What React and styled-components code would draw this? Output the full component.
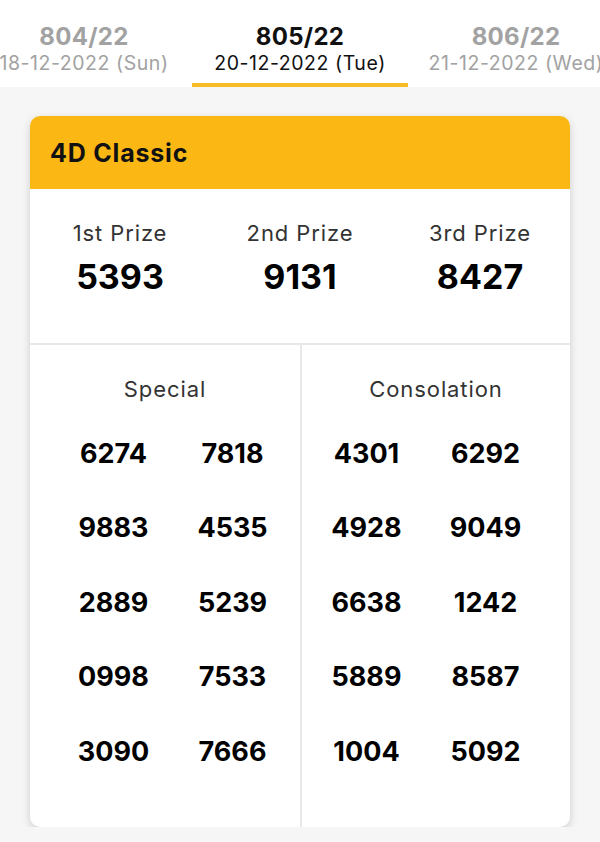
import React from "react";
import styled, { createGlobalStyle } from "styled-components";

const Global = createGlobalStyle`
  html, body { margin: 0; padding: 0; }
  body {
    background: #f6f6f6;
    font-family: "Inter", "Roboto", "Noto Sans", sans-serif;
    color: #111;
  }
`;

const TabBar = styled.div`
  background: #fff;
  overflow: hidden;
  height: 87px;
`;

const TabTrack = styled.div`
  display: flex;
  margin-left: -24px;
`;

const Tab = styled.div`
  flex: none;
  width: 216px;
  height: 87px;
  box-sizing: border-box;
  padding-top: 23px;
  display: flex;
  flex-direction: column;
  align-items: center;
  border-bottom: 4px solid ${(p) => (p.$active ? "#f5bc26" : "transparent")};
  color: ${(p) => (p.$active ? "#111" : "#a2a2a2")};
  white-space: nowrap;
`;

const TabNo = styled.div`
  font-size: 24px;
  line-height: 28px;
  font-weight: 700;
  letter-spacing: 0.3px;
`;

const TabDate = styled.div`
  font-size: 19.5px;
  line-height: 24px;
  font-weight: 400;
  letter-spacing: 0.55px;
`;

const Card = styled.div`
  margin: 29px 30px 0;
  background: #fff;
  border-radius: 10px;
  overflow: hidden;
  box-shadow: 0 3px 8px rgba(0, 0, 0, 0.17);
`;

const CardHeader = styled.div`
  height: 73px;
  background: #fbb814;
  display: flex;
  align-items: center;
  padding: 0 20px;
  font-size: 25px;
  font-weight: 700;
  letter-spacing: 0.8px;
  color: #111;
`;

const PrizeRow = styled.div`
  display: grid;
  grid-template-columns: repeat(3, 1fr);
  height: 156px;
  box-sizing: border-box;
  padding-top: 30px;
  border-bottom: 2px solid #e8e8e8;
`;

const Prize = styled.div`
  display: flex;
  flex-direction: column;
  align-items: center;
  gap: 10px;
`;

const Label = styled.div`
  font-size: 22px;
  line-height: 28px;
  color: #333;
  font-weight: 400;
  letter-spacing: 0.9px;
`;

const BigNum = styled.div`
  font-size: 34px;
  line-height: 40px;
  font-weight: 700;
  color: #000;
`;

const Lower = styled.div`
  display: grid;
  grid-template-columns: 1fr 1fr;
`;

const Half = styled.div`
  padding-top: 30px;
  padding-bottom: 38px;
  border-left: ${(p) => (p.$divider ? "2px solid #e8e8e8" : "none")};
  display: flex;
  flex-direction: column;
  align-items: stretch;
`;

const HalfTitle = styled.div`
  text-align: center;
  font-size: 22px;
  line-height: 28px;
  color: #333;
  letter-spacing: 0.9px;
  margin-bottom: 13px;
`;

const NumGrid = styled.div`
  display: grid;
  grid-template-columns: 119px 119px;
  grid-auto-rows: 74.5px;
  padding-left: ${(p) => p.$pl}px;
`;

const Num = styled.div`
  display: flex;
  align-items: center;
  justify-content: center;
  font-size: 27px;
  font-weight: 700;
  color: #000;
`;

const special = ["6274", "7818", "9883", "4535", "2889", "5239", "0998", "7533", "3090", "7666"];
const consolation = ["4301", "6292", "4928", "9049", "6638", "1242", "5889", "8587", "1004", "5092"];

const tabs = [
  { no: "804/22", date: "18-12-2022 (Sun)" },
  { no: "805/22", date: "20-12-2022 (Tue)", active: true },
  { no: "806/22", date: "21-12-2022 (Wed)" },
];

const prizes = [
  { label: "1st Prize", value: "5393" },
  { label: "2nd Prize", value: "9131" },
  { label: "3rd Prize", value: "8427" },
];

export default function App() {
  return (
    <>
      <Global />
      <TabBar>
        <TabTrack>
          {tabs.map((t) => (
            <Tab key={t.no} $active={t.active}>
              <TabNo>{t.no}</TabNo>
              <TabDate>{t.date}</TabDate>
            </Tab>
          ))}
        </TabTrack>
      </TabBar>
      <Card>
        <CardHeader>4D Classic</CardHeader>
        <PrizeRow>
          {prizes.map((p) => (
            <Prize key={p.label}>
              <Label>{p.label}</Label>
              <BigNum>{p.value}</BigNum>
            </Prize>
          ))}
        </PrizeRow>
        <Lower>
          <Half>
            <HalfTitle>Special</HalfTitle>
            <NumGrid $pl={24}>
              {special.map((n, i) => (
                <Num key={i}>{n}</Num>
              ))}
            </NumGrid>
          </Half>
          <Half $divider>
            <HalfTitle>Consolation</HalfTitle>
            <NumGrid $pl={5}>
              {consolation.map((n, i) => (
                <Num key={i}>{n}</Num>
              ))}
            </NumGrid>
          </Half>
        </Lower>
      </Card>
    </>
  );
}
